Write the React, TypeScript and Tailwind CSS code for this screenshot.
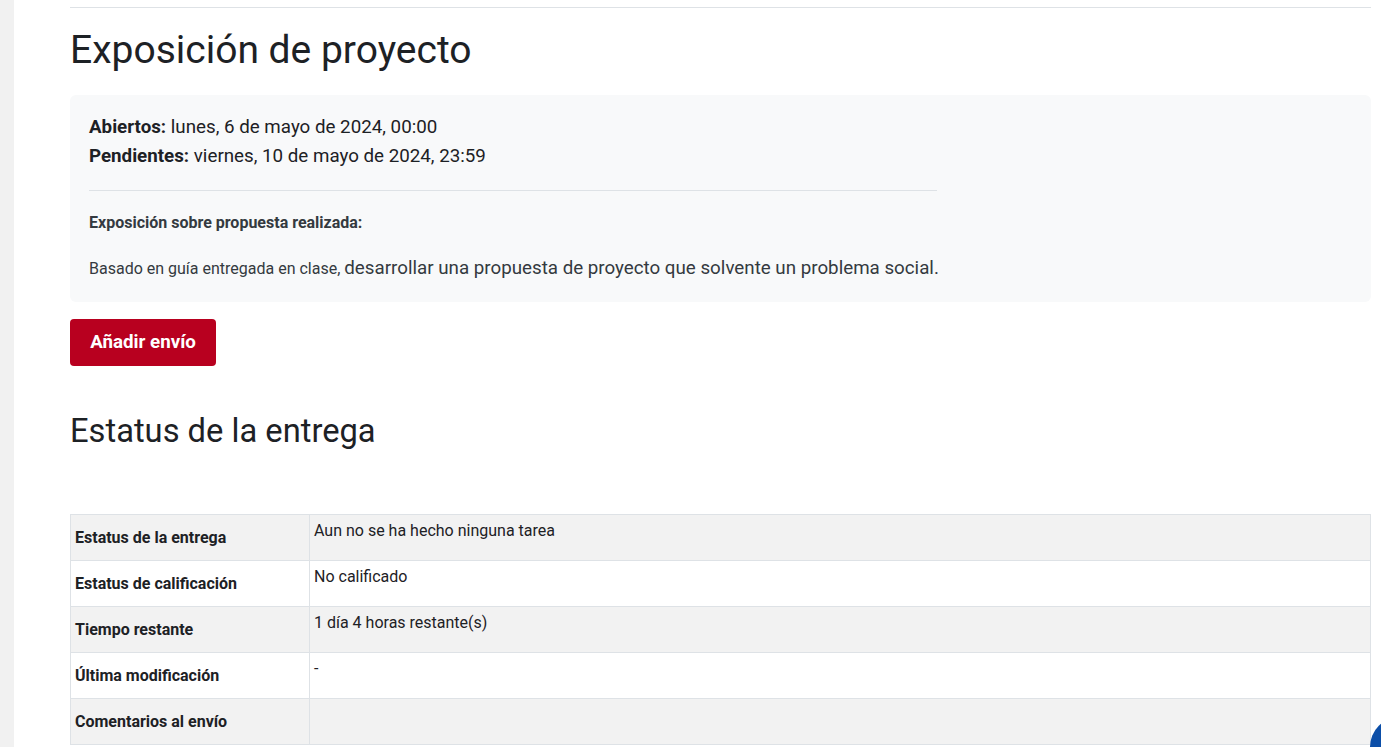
const rows = [
  { label: "Estatus de la entrega", value: "Aun no se ha hecho ninguna tarea" },
  { label: "Estatus de calificación", value: "No calificado" },
  { label: "Tiempo restante", value: "1 día 4 horas restante(s)" },
  { label: "Última modificación", value: "-" },
  { label: "Comentarios al envío", value: "" },
];

export default function App() {
  return (
    <div
      className="relative flex h-[747px] overflow-hidden bg-white text-[#1d2125]"
      style={{ fontFamily: "Roboto, 'Liberation Sans', sans-serif" }}
    >
      <div className="w-[14px] shrink-0 bg-[#f1f1f1]" />

      <div className="ml-[56px] mr-[10px] flex-1 pt-[7px]">
        <div className="border-t border-[#dee2e6]" />

        <h2 className="mt-[19px] text-[39px] leading-[1.2] font-normal">
          Exposición de proyecto
        </h2>

        {/* dates + description */}
        <div className="mt-[21px] rounded-md bg-[#f8f9fa] px-[19px] pt-[18px] pb-[19px]">
          <div className="text-[18.75px] leading-[29px]">
            <div>
              <span className="font-bold">Abiertos:</span> lunes, 6 de mayo de 2024, 00:00
            </div>
            <div>
              <span className="font-bold">Pendientes:</span> viernes, 10 de mayo de 2024, 23:59
            </div>
          </div>

          <div className="mt-[19px] w-[848px] border-t border-[#dee2e6]" />

          <p className="mt-[21px] text-[16px] leading-[22px] font-bold text-[#343a40]">
            Exposición sobre propuesta realizada:
          </p>
          <p className="mt-[20px] text-[16px] leading-[28px] text-[#343a40]">
            Basado en guía entregada en clase,{" "}
            <span className="text-[18.75px]">
              desarrollar una propuesta de proyecto que solvente un problema social.
            </span>
          </p>
        </div>

        <button className="mt-[17px] h-[47px] w-[146px] rounded bg-[#b8001f] text-[18.75px] font-bold text-white">
          Añadir envío
        </button>

        <h3 className="mt-[46px] text-[32.7px] leading-[1.2] font-normal">
          Estatus de la entrega
        </h3>

        <div className="mt-[63px] border-t border-l border-[#dee2e6]">
          {rows.map((r, i) => (
            <div
              key={r.label}
              className={
                "flex h-[46px] border-b border-[#dee2e6] " +
                (i % 2 === 0 ? "bg-[#f2f2f2]" : "bg-white")
              }
            >
              <div className="flex w-[239px] shrink-0 items-center border-r border-[#dee2e6] px-[4px] text-[16px] font-bold">
                {r.label}
              </div>
              <div className="flex-1 border-r border-[#dee2e6] px-[4px] pt-[4px] text-[16px] leading-[24px]">
                {r.value}
              </div>
            </div>
          ))}
        </div>
      </div>

      {/* floating help button, cut off by the window edge */}
      <div className="absolute top-[717px] left-[1370px] h-[60px] w-[60px] rounded-full bg-[#0b4ea8]" />
    </div>
  );
}
